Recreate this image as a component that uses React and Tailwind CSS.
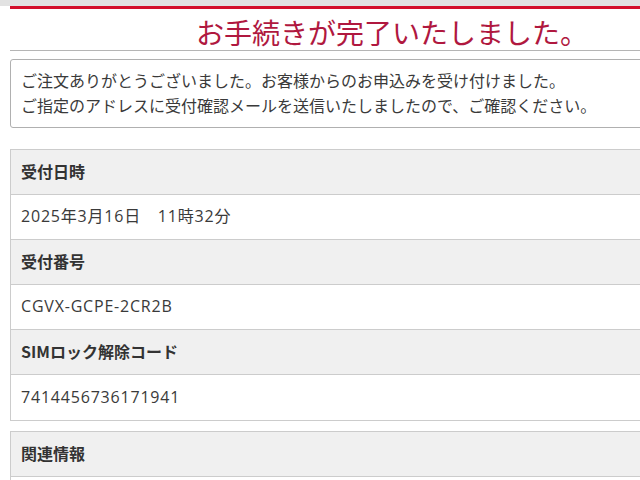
import React from 'react';

const rows = [
  { label: '受付日時', value: '2025年3月16日　11時32分' },
  { label: '受付番号', value: 'CGVX-GCPE-2CR2B' },
  { label: 'SIMロック解除コード', value: '7414456736171941' },
];

export default function App() {
  return (
    <div
      className="w-[640px] h-[480px] overflow-hidden bg-white text-[#333]"
      style={{ fontFamily: '"Noto Sans CJK JP", "Noto Sans", sans-serif' }}
    >
      {/* top strip */}
      <div className="h-[6px] bg-[#e2e2e2]" />

      <div className="ml-[10px] w-[764px]">
        {/* title */}
        <div className="border-t-[3px] border-[#d3102c]">
          <h1 className="pt-[9px] pb-[4px] text-center text-[28px] leading-[28px] text-[#b0183f] border-b border-[#b5b5b5]">
            お手続きが完了いたしました。
          </h1>
        </div>

        {/* message */}
        <div className="mt-[8px] border border-[#b0b0b0] rounded-[3px] pl-[10px] pt-[8px] pb-[9px] text-[16px] leading-[25px] text-[#3a3a3a]">
          <p>ご注文ありがとうございました。お客様からのお申込みを受け付けました。</p>
          <p>ご指定のアドレスに受付確認メールを送信いたしましたので、ご確認ください。</p>
        </div>

        {/* details */}
        <div className="mt-[21px] border border-[#cccccc]">
          {rows.map((r, i) => (
            <React.Fragment key={r.label}>
              <div className="h-[45px] flex items-center pl-[10px] pb-[3px] bg-[#f0f0f0] border-b border-[#cccccc] text-[16px] font-bold">
                {r.label}
              </div>
              <div
                className={`h-[45px] flex items-center pl-[10px] pb-[2px] bg-white text-[16px] tracking-[0.05em] text-[#3a3a3a] font-['Open_Sans','Noto_Sans_CJK_JP',sans-serif] ${
                  i < rows.length - 1 ? 'border-b border-[#cccccc]' : ''
                }`}
              >
                {r.value}
              </div>
            </React.Fragment>
          ))}
        </div>

        {/* related */}
        <div className="mt-[10px] border border-[#cccccc]">
          <div className="h-[45px] flex items-center pl-[10px] pb-[3px] bg-[#f0f0f0] border-b border-[#cccccc] text-[16px] font-bold">
            関連情報
          </div>
          <div className="h-[45px] bg-white" />
        </div>
      </div>
    </div>
  );
}
